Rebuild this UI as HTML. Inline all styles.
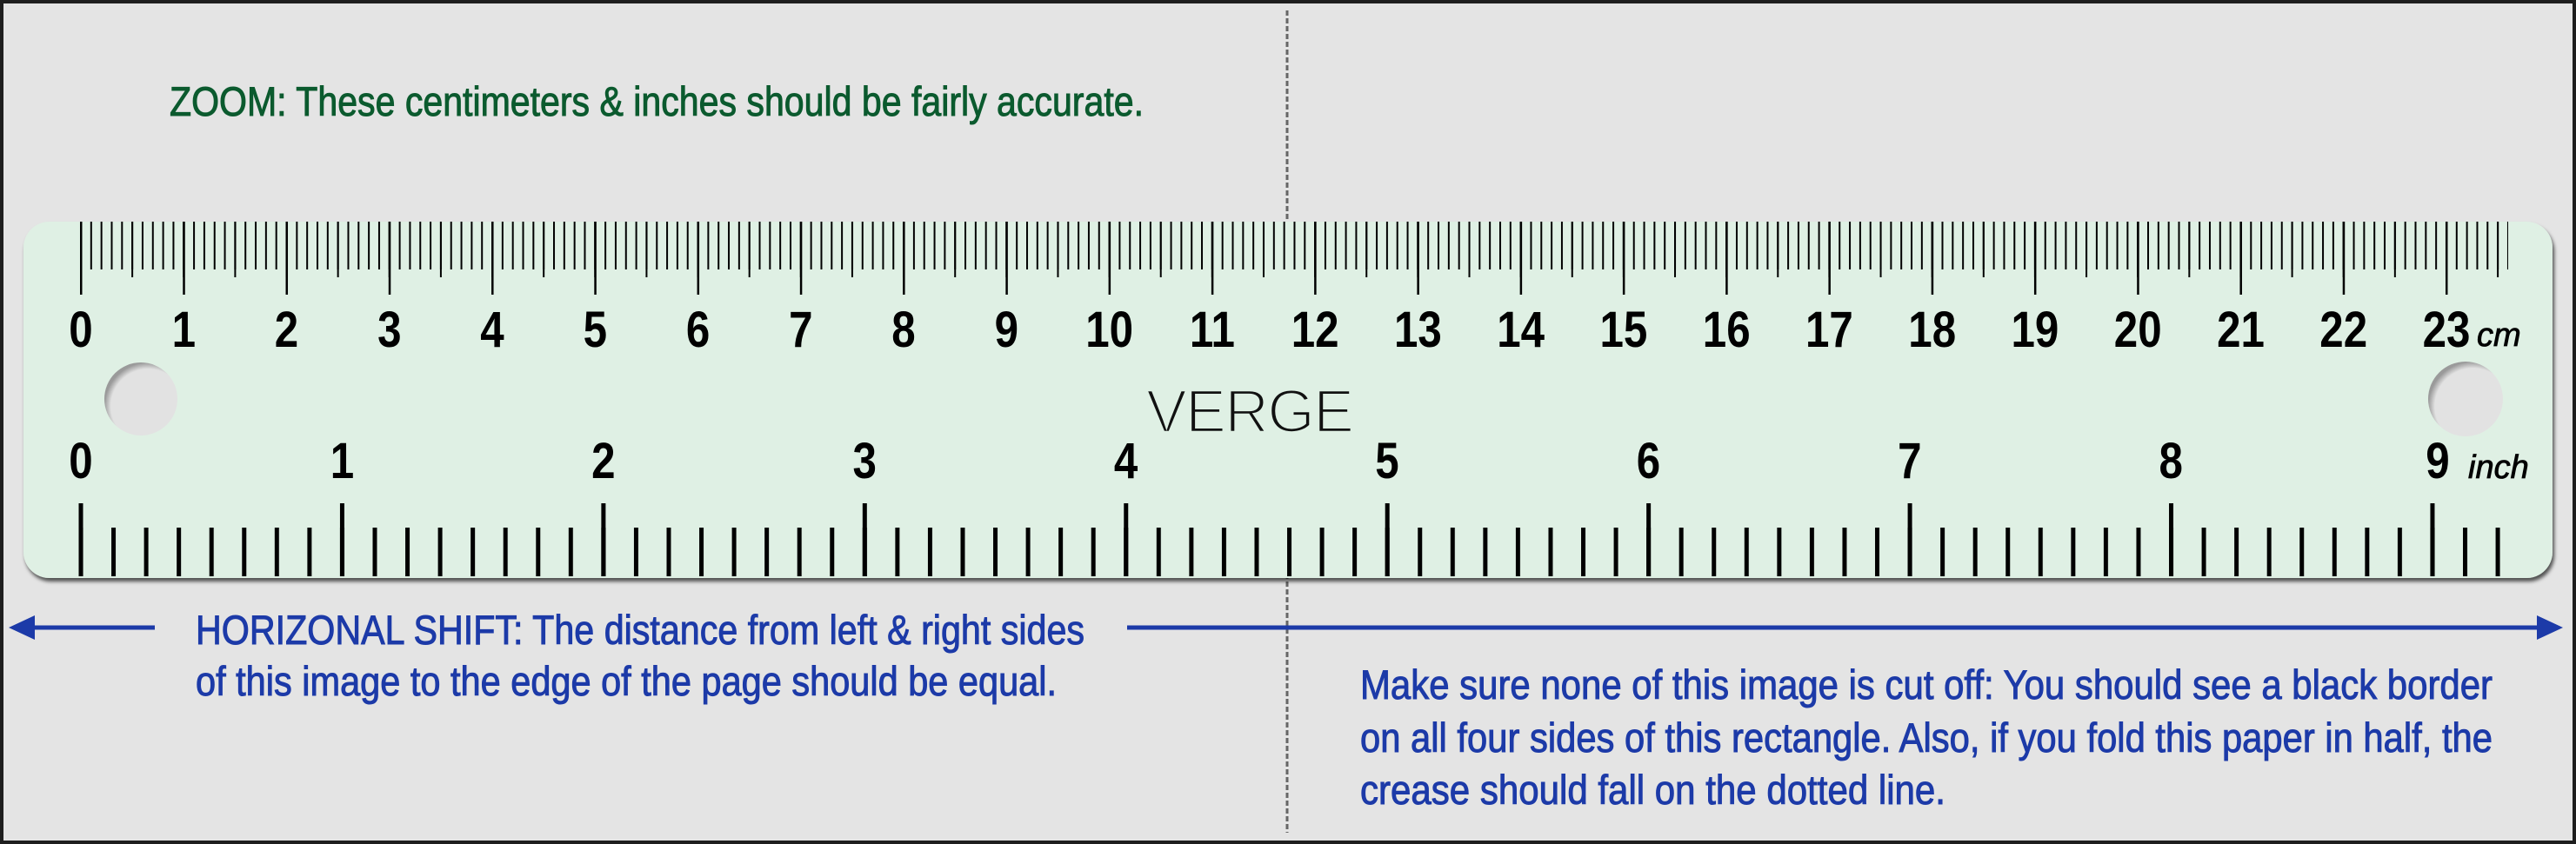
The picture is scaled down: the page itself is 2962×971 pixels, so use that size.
<!DOCTYPE html>
<html><head><meta charset="utf-8"><style>
html,body{margin:0;padding:0;background:#e4e4e4;}
svg{display:block;}
</style></head><body>
<svg width="2962" height="971" viewBox="0 0 2962 971" xmlns="http://www.w3.org/2000/svg">
<defs>
<pattern id="mm" patternUnits="userSpaceOnUse" x="92" y="255" width="11.826" height="60"><rect x="0" y="0" width="2" height="55" fill="#000"/></pattern>
<pattern id="half" patternUnits="userSpaceOnUse" x="92" y="255" width="59.13" height="70"><rect x="0" y="0" width="2" height="64" fill="#000"/></pattern>
<pattern id="cm" patternUnits="userSpaceOnUse" x="92" y="255" width="118.26" height="90"><rect x="0" y="0" width="2.5" height="84" fill="#000"/></pattern>
<pattern id="ei" patternUnits="userSpaceOnUse" x="90.5" y="607" width="37.555" height="60"><rect x="0" y="0" width="5" height="56" fill="#000"/></pattern>
<pattern id="in" patternUnits="userSpaceOnUse" x="90.5" y="579" width="300.44" height="90"><rect x="0" y="0" width="5" height="84" fill="#000"/></pattern>
<filter id="sh" x="-5%" y="-10%" width="110%" height="130%"><feDropShadow dx="2" dy="4" stdDeviation="2" flood-color="#000" flood-opacity="0.65"/></filter>
<radialGradient id="hole" cx="0.6" cy="0.6" r="0.6"><stop offset="0.85" stop-color="#e2e2e2"/><stop offset="1" stop-color="#9a9a9a"/></radialGradient>
</defs>
<rect x="0" y="0" width="2962" height="971" fill="#e4e4e4"/>
<rect x="2" y="2" width="2958" height="967" fill="none" stroke="#1e1e1e" stroke-width="4"/>
<line x1="1480" y1="12" x2="1480" y2="958" stroke="#666" stroke-width="3" stroke-dasharray="6 3"/>
<rect x="27" y="255" width="2908" height="410" rx="30" ry="30" fill="#dff0e4" filter="url(#sh)"/>
<rect x="92" y="255" width="2792" height="55" fill="url(#mm)"/>
<rect x="92" y="255" width="2792" height="64" fill="url(#half)"/>
<rect x="92" y="255" width="2723" height="84" fill="url(#cm)"/>
<rect x="90.5" y="607" width="2785" height="56" fill="url(#ei)"/>
<rect x="90.5" y="579" width="2710" height="84" fill="url(#in)"/>
<circle cx="162" cy="459" r="42" fill="url(#hole)"/>
<circle cx="2835" cy="459" r="43" fill="url(#hole)"/>
<g font-family="Liberation Sans, sans-serif" font-weight="bold" font-size="58" fill="#000" text-anchor="middle">
<text transform="translate(93,399) scale(0.85,1)">0</text>
<text transform="translate(211.3,399) scale(0.85,1)">1</text>
<text transform="translate(329.5,399) scale(0.85,1)">2</text>
<text transform="translate(447.8,399) scale(0.85,1)">3</text>
<text transform="translate(566,399) scale(0.85,1)">4</text>
<text transform="translate(684.3,399) scale(0.85,1)">5</text>
<text transform="translate(802.6,399) scale(0.85,1)">6</text>
<text transform="translate(920.8,399) scale(0.85,1)">7</text>
<text transform="translate(1039,399) scale(0.85,1)">8</text>
<text transform="translate(1157.3,399) scale(0.85,1)">9</text>
<text transform="translate(1275.6,399) scale(0.85,1)">10</text>
<text transform="translate(1393.9,399) scale(0.85,1)">11</text>
<text transform="translate(1512.1,399) scale(0.85,1)">12</text>
<text transform="translate(1630.4,399) scale(0.85,1)">13</text>
<text transform="translate(1748.6,399) scale(0.85,1)">14</text>
<text transform="translate(1866.9,399) scale(0.85,1)">15</text>
<text transform="translate(1985.2,399) scale(0.85,1)">16</text>
<text transform="translate(2103.4,399) scale(0.85,1)">17</text>
<text transform="translate(2221.7,399) scale(0.85,1)">18</text>
<text transform="translate(2339.9,399) scale(0.85,1)">19</text>
<text transform="translate(2458.2,399) scale(0.85,1)">20</text>
<text transform="translate(2576.5,399) scale(0.85,1)">21</text>
<text transform="translate(2694.7,399) scale(0.85,1)">22</text>
<text transform="translate(2813,399) scale(0.85,1)">23</text>
<text transform="translate(93,550) scale(0.85,1)">0</text>
<text transform="translate(393.4,550) scale(0.85,1)">1</text>
<text transform="translate(693.8,550) scale(0.85,1)">2</text>
<text transform="translate(994.2,550) scale(0.85,1)">3</text>
<text transform="translate(1294.6,550) scale(0.85,1)">4</text>
<text transform="translate(1595,550) scale(0.85,1)">5</text>
<text transform="translate(1895.4,550) scale(0.85,1)">6</text>
<text transform="translate(2195.8,550) scale(0.85,1)">7</text>
<text transform="translate(2496.2,550) scale(0.85,1)">8</text>
<text transform="translate(2803,550) scale(0.85,1)">9</text>
</g>
<g font-family="Liberation Sans, sans-serif" font-style="italic" font-size="38" fill="#000" stroke="#000" stroke-width="0.8">
<text x="2848" y="398">cm</text>
<text x="2838" y="550">inch</text>
</g>
<text x="1318" y="497" font-family="Liberation Sans, sans-serif" font-size="70" fill="#111" stroke="#dff0e4" stroke-width="2.6" textLength="247" lengthAdjust="spacing" letter-spacing="8">VERGE</text>
<g font-family="Liberation Sans, sans-serif" font-size="47">
<text x="195" y="133" fill="#0b5a2e" stroke="#0b5a2e" stroke-width="1" textLength="1120" lengthAdjust="spacingAndGlyphs">ZOOM: These centimeters &amp; inches should be fairly accurate.</text>
<g fill="#1c3aa8" stroke="#1c3aa8" stroke-width="1">
<text x="225" y="741" textLength="1022" lengthAdjust="spacingAndGlyphs">HORIZONAL SHIFT: The distance from left &amp; right sides</text>
<text x="225" y="800" textLength="990" lengthAdjust="spacingAndGlyphs">of this image to the edge of the page should be equal.</text>
<text x="1564" y="804" textLength="1302" lengthAdjust="spacingAndGlyphs">Make sure none of this image is cut off: You should see a black border</text>
<text x="1564" y="865" textLength="1302" lengthAdjust="spacingAndGlyphs">on all four sides of this rectangle. Also, if you fold this paper in half, the</text>
<text x="1564" y="925" textLength="673" lengthAdjust="spacingAndGlyphs">crease should fall on the dotted line.</text>
</g>
</g>
<line x1="36" y1="722" x2="178" y2="722" stroke="#1c3aa8" stroke-width="5"/>
<polygon points="10,722 40,708 40,736" fill="#1c3aa8"/>
<line x1="1296" y1="722" x2="2920" y2="722" stroke="#1c3aa8" stroke-width="5"/>
<polygon points="2947,722 2917,708 2917,736" fill="#1c3aa8"/>
</svg>
</body></html>
